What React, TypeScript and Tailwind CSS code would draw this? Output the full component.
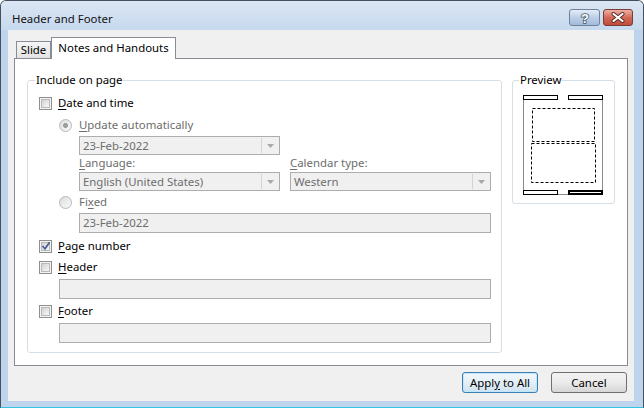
import React from "react";

function Check({ checked = false }: { checked?: boolean }) {
  return (
    <div className="w-[13px] h-[13px] shrink-0 border border-[#8e8f8f] bg-[#f4f4f4] p-[1px]">
      <div className="relative w-full h-full border border-[#b9b9b9] bg-linear-to-br from-[#d2d2d2] to-[#f8f8f8]">
        {checked && (
          <svg className="absolute -left-[1px] -top-[2px]" width="10" height="10" viewBox="0 0 10 10">
            <path d="M1.5 5 L4 7.8 L8.6 1.2" fill="none" stroke="#4a5f92" strokeWidth="1.7" />
          </svg>
        )}
      </div>
    </div>
  );
}

function Radio({ selected = false }: { selected?: boolean }) {
  return (
    <div className="w-[13px] h-[13px] shrink-0 rounded-full border border-[#b8b8b8] bg-linear-to-br from-[#dcdcdc] to-[#fbfbfb] flex items-center justify-center">
      {selected && <div className="w-[5px] h-[5px] rounded-full bg-[#a2a2a2] border border-[#8f8f8f]" />}
    </div>
  );
}

function Combo({ text, w }: { text: string; w: string }) {
  return (
    <div className={`${w} h-[19px] flex border border-[#adadad] bg-[#f0f0f0] p-[1px]`}>
      <div className="flex-1 flex items-center pl-[2px] text-[#6d6d6d] leading-none">{text}</div>
      <div className="w-[17px] h-full border-l border-[#d4d4d4] flex items-center justify-center">
        <svg width="7" height="4" viewBox="0 0 7 4">
          <path d="M0 0 H7 L3.5 4 Z" fill="#a8a8a8" />
        </svg>
      </div>
    </div>
  );
}

function TextBox({ text = "", w }: { text?: string; w: string }) {
  return (
    <div className={`${w} h-[20px] flex items-center border border-[#adadad] bg-[#f0f0f0] pl-[3px] text-[#6d6d6d]`}>
      {text}
    </div>
  );
}

function U({ children }: { children: React.ReactNode }) {
  return <span className="underline underline-offset-[2px] decoration-[1px]">{children}</span>;
}

export default function App() {
  return (
    <div className="w-[644px] h-[408px] flex flex-col bg-[#bdd4ec] border border-[#44505e] border-b-[#33c4e0] rounded-t-[6px] overflow-hidden font-['Noto_Sans',sans-serif] text-[11.4px] text-black leading-[16px]">
      {/* Title bar */}
      <div className="h-[29px] shrink-0 flex bg-linear-to-b from-[#dbe6f3] to-[#c6d9ee]">
        <div className="pl-[11px] pt-[10px] text-[#111]">Header and Footer</div>
        <div className="ml-auto flex gap-[3px] pt-[8px] pr-[10px]">
          <div className="w-[31px] h-[17px] rounded-[3px] border border-[#6f819b] bg-linear-to-b from-[#e4edf7] via-[#bccfe6] to-[#a3bbda] flex items-center justify-center">
            <svg width="14" height="15" viewBox="0 0 14 15">
              <text x="7" y="12.5" textAnchor="middle" fontSize="13" fontWeight="bold" fontFamily="Liberation Sans, sans-serif" fill="#ffffff" stroke="#4a5a70" strokeWidth="1.6" paintOrder="stroke">?</text>
            </svg>
          </div>
          <div className="w-[30px] h-[17px] rounded-[3px] border border-[#7a3c34] bg-linear-to-b from-[#eeb1a4] via-[#d26a59] to-[#c04a3a] flex items-center justify-center">
            <svg width="14" height="11" viewBox="0 0 14 11">
              <path d="M2.5 2 L11.5 9 M11.5 2 L2.5 9" stroke="#5a2a24" strokeWidth="4" strokeLinecap="round" />
              <path d="M2.5 2 L11.5 9 M11.5 2 L2.5 9" stroke="#ffffff" strokeWidth="2.2" strokeLinecap="round" />
            </svg>
          </div>
        </div>
      </div>

      {/* Frame + client */}
      <div className="flex-1 flex pl-[7px] pr-[9px] pb-[6px]">
        <div className="flex-1 bg-[#f0f0f0] flex flex-col">
          {/* Tabs */}
          <div className="relative z-10 -mb-px flex items-end pt-[7px] pl-[8px]">
            <div className="w-[35px] h-[18px] border border-[#898c95] bg-linear-to-b from-[#f6f6f6] to-[#e3e3e3] flex items-center justify-center">
              Slide
            </div>
            <div className="w-[125px] h-[22px] border border-b-0 border-[#898c95] bg-white flex items-center justify-center pb-[2px]">
              Notes and Handouts
            </div>
          </div>

          {/* Panel */}
          <div className="mx-[6px] h-[308px] border border-[#898c95] bg-white flex items-start">
            {/* Include on page group */}
            <div className="relative ml-[12px] mt-[21px] w-[475px] h-[273px] border border-[#d5dfe5] rounded-[3px] flex flex-col pl-[11px]">
              <div className="absolute left-[7px] -top-[9px] px-[1px] bg-white">Include on page</div>

              <div className="mt-[14px] h-[16px] flex items-center gap-[6px]">
                <Check />
                <span><U>D</U>ate and time</span>
              </div>

              <div className="mt-[6px] h-[16px] flex items-center gap-[7px] pl-[20px] text-[#6d6d6d]">
                <Radio selected />
                <span><U>U</U>pdate automatically</span>
              </div>

              <div className="mt-[3px] pl-[40px] flex">
                <Combo text="23-Feb-2022" w="w-[201px]" />
              </div>

              <div className="h-[16px] pl-[40px] flex text-[#6d6d6d]">
                <div className="w-[211px]"><U>L</U>anguage:</div>
                <div><U>C</U>alendar type:</div>
              </div>

              <div className="mt-[1px] pl-[40px] flex gap-[10px]">
                <Combo text="English (United States)" w="w-[201px]" />
                <Combo text="Western" w="w-[201px]" />
              </div>

              <div className="mt-[3px] h-[16px] flex items-center gap-[7px] pl-[20px] text-[#6d6d6d]">
                <Radio />
                <span>Fi<U>x</U>ed</span>
              </div>

              <div className="mt-[3px] pl-[40px] flex">
                <TextBox text="23-Feb-2022" w="w-[412px]" />
              </div>

              <div className="mt-[5px] h-[16px] flex items-center gap-[6px]">
                <Check checked />
                <span><U>P</U>age number</span>
              </div>

              <div className="mt-[5px] h-[16px] flex items-center gap-[6px]">
                <Check />
                <span><U>H</U>eader</span>
              </div>

              <div className="mt-[4px] pl-[20px] flex">
                <TextBox w="w-[432px]" />
              </div>

              <div className="mt-[4px] h-[16px] flex items-center gap-[6px]">
                <Check />
                <span><U>F</U>ooter</span>
              </div>

              <div className="mt-[4px] pl-[20px] flex">
                <TextBox w="w-[432px]" />
              </div>
            </div>

            {/* Preview group */}
            <div className="relative ml-[10px] mt-[21px] w-[103px] h-[124px] border border-[#d5dfe5] rounded-[3px] pl-[10px] pt-[14px]">
              <div className="absolute left-[6px] -top-[9px] px-[1px] bg-white">Preview</div>
              <svg width="81" height="100" viewBox="0 0 81 100" className="block">
                <path d="M0.5 2 V99.5 H79.5 V2" fill="none" stroke="#8a8a8a" strokeWidth="1" />
                <rect x="0.5" y="0.5" width="34" height="4" fill="#fff" stroke="#000" strokeWidth="1" />
                <rect x="45.5" y="0.5" width="34" height="4" fill="#fff" stroke="#000" strokeWidth="1" />
                <rect x="9.5" y="13.5" width="62" height="33" fill="none" stroke="#000" strokeWidth="1" strokeDasharray="3 2" />
                <rect x="8.5" y="48.5" width="64" height="39" fill="none" stroke="#000" strokeWidth="1" strokeDasharray="3 2" />
                <rect x="0.5" y="95.5" width="34" height="4" fill="#fff" stroke="#000" strokeWidth="1" />
                <rect x="46" y="96" width="33" height="3" fill="#fff" stroke="#000" strokeWidth="2" />
              </svg>
            </div>
          </div>

          {/* Buttons */}
          <div className="mt-[6px] flex justify-end gap-[13px] pr-[7px]">
            <div className="w-[76px] h-[21px] rounded-[3px] border border-[#3c7fb1] shadow-[inset_0_0_0_1px_#bfe6f9] bg-linear-to-b from-[#f2f8fc] via-[#e4eff7] to-[#cfe2ef] flex items-center justify-center">
              <span>Appl<U>y</U> to All</span>
            </div>
            <div className="w-[76px] h-[21px] rounded-[3px] border border-[#707070] bg-linear-to-b from-[#f2f2f2] via-[#ebebeb] to-[#d6d6d6] flex items-center justify-center">
              Cancel
            </div>
          </div>
        </div>
      </div>
    </div>
  );
}
